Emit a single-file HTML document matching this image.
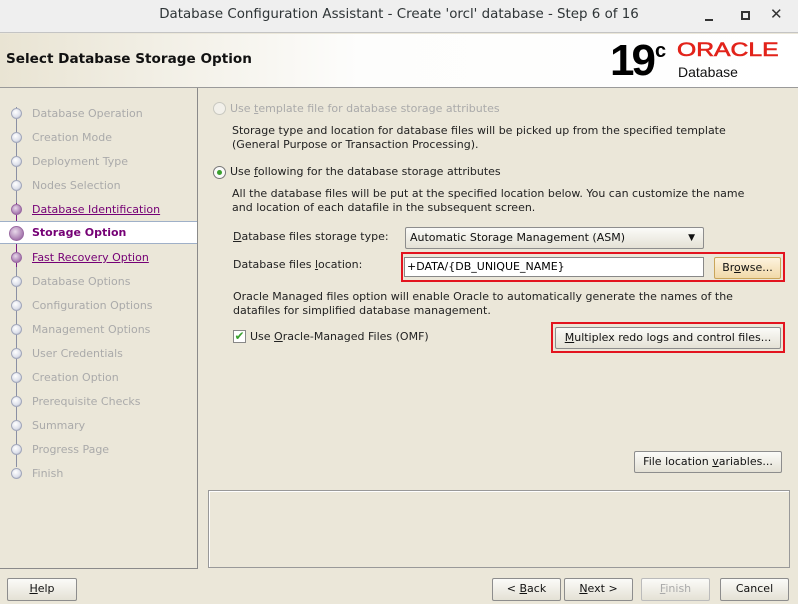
<!DOCTYPE html>
<html><head><style>
*{margin:0;padding:0;box-sizing:border-box}
body{width:798px;height:604px;overflow:hidden;background:#ebe7d9;font-family:"DejaVu Sans",sans-serif;font-size:11px;color:#222;position:relative}
.abs{position:absolute;white-space:nowrap}
#tb{left:0;top:0;width:798px;height:33px;background:#efefef;border-bottom:1px solid #c4c4c4}
#tb .t{position:absolute;left:0;width:798px;top:7px;text-align:center;font-size:13.4px;color:#2e3436}
#hd{left:0;top:34px;width:798px;height:54px;background:linear-gradient(90deg,#e9e4d3 0%,#fdfdfc 45%,#fff 100%);border-bottom:1px solid #9a9a9a}
#hd .h{position:absolute;left:6px;top:17px;font-size:13.6px;font-weight:bold;color:#111}
#lp{left:0;top:88px;width:198px;height:481px;border-right:1px solid #8a8a8a;border-bottom:1px solid #8a8a8a}
.step{position:absolute;left:32px;font-size:11px;color:#aaa;white-space:nowrap}
.dot{position:absolute;left:11px;width:11px;height:11px;border-radius:50%;background:radial-gradient(circle at 40% 35%,#fff,#dde0ea 60%,#9aa0b6);border:1px solid #a3a8bb}
.pdot{background:radial-gradient(circle at 40% 35%,#e8d8ea,#a77aaf 70%,#7e3f88);border-color:#9a6aa2}
.lnk{color:#750075;text-decoration:underline}
.btn{position:absolute;height:22px;border:1px solid #8d8d8d;border-radius:2px;background:linear-gradient(#fbfbf8,#e4e1d5);text-align:center;line-height:20px;font-size:11px;color:#111;white-space:nowrap}
.red{position:absolute;border:2px solid #e3141f}
u{text-decoration:underline}
</style></head><body>
<div id="tb" class="abs"><div class="t">Database Configuration Assistant - Create 'orcl' database - Step 6 of 16</div>
<div class="abs" style="left:705px;top:19px;width:8px;height:2px;background:#333"></div>
<div class="abs" style="left:741px;top:11px;width:9px;height:9px;border:2px solid #333"></div>
<div class="abs" style="left:770px;top:5px;font-size:15px;font-weight:bold;color:#333">✕</div>
</div>
<div id="hd" class="abs"><div class="h">Select Database Storage Option</div>
<div class="abs" style="left:610px;top:4px;font-family:'Liberation Sans',sans-serif;font-size:44px;font-weight:bold;letter-spacing:-3px;color:#000;line-height:46px">19</div>
<div class="abs" style="left:655px;top:6px;font-family:'Liberation Sans',sans-serif;font-size:20px;font-weight:bold;color:#000">c</div>
<div class="abs" style="left:677px;top:6px;font-family:'Liberation Sans',sans-serif;font-size:19px;color:#e2231a;letter-spacing:0px;transform:scaleX(1.3);transform-origin:left;-webkit-text-stroke:0.6px #e2231a">ORACLE</div>
<div class="abs" style="left:678px;top:30px;font-family:'Liberation Sans',sans-serif;font-size:14px;color:#111">Database</div>
</div>
<div id="lp" class="abs">
<div class="abs" style="left:16px;top:19px;width:1px;height:360px;background:#8a8fa3"></div>
<div class="abs" style="left:16px;top:115px;width:1px;height:64px;background:#7a1a85"></div>
<div class="abs" style="left:0;top:133px;width:197px;height:23px;background:#fff;border-top:1px solid #9fb0c8;border-bottom:1px solid #9fb0c8"></div>
</div>
<div class="abs" style="left:0;top:89px">
<div class="dot" style="top:19px"></div><div class="step" style="top:18px">Database Operation</div>
<div class="dot" style="top:43px"></div><div class="step" style="top:42px">Creation Mode</div>
<div class="dot" style="top:67px"></div><div class="step" style="top:66px">Deployment Type</div>
<div class="dot" style="top:91px"></div><div class="step" style="top:90px">Nodes Selection</div>
<div class="dot pdot" style="top:115px"></div><div class="step lnk" style="top:114px">Database Identification</div>
<div class="dot pdot" style="top:137px;left:9px;width:15px;height:15px"></div><div class="step" style="top:137px;color:#750075;font-weight:bold">Storage Option</div>
<div class="dot pdot" style="top:163px"></div><div class="step lnk" style="top:162px">Fast Recovery Option</div>
<div class="dot" style="top:187px"></div><div class="step" style="top:186px">Database Options</div>
<div class="dot" style="top:211px"></div><div class="step" style="top:210px">Configuration Options</div>
<div class="dot" style="top:235px"></div><div class="step" style="top:234px">Management Options</div>
<div class="dot" style="top:259px"></div><div class="step" style="top:258px">User Credentials</div>
<div class="dot" style="top:283px"></div><div class="step" style="top:282px">Creation Option</div>
<div class="dot" style="top:307px"></div><div class="step" style="top:306px">Prerequisite Checks</div>
<div class="dot" style="top:331px"></div><div class="step" style="top:330px">Summary</div>
<div class="dot" style="top:355px"></div><div class="step" style="top:354px">Progress Page</div>
<div class="dot" style="top:379px"></div><div class="step" style="top:378px">Finish</div>
</div>
<!-- main -->
<div class="abs" style="left:213px;top:102px;width:13px;height:13px;border-radius:50%;border:1px solid #c8c8c0;background:#f2f0ea"></div>
<div class="abs" style="left:230px;top:102px;color:#aaa">Use <u>t</u>emplate file for database storage attributes</div>
<div class="abs" style="left:232px;top:124px;line-height:14px">Storage type and location for database files will be picked up from the specified template<br>(General Purpose or Transaction Processing).</div>
<div class="abs" style="left:213px;top:166px;width:13px;height:13px;border-radius:50%;border:1px solid #777;background:#fafafa"><div style="position:absolute;left:3px;top:3px;width:5px;height:5px;border-radius:50%;background:#3aa02e"></div></div>
<div class="abs" style="left:230px;top:165px">Use <u>f</u>ollowing for the database storage attributes</div>
<div class="abs" style="left:232px;top:187px;line-height:14px">All the database files will be put at the specified location below. You can customize the name<br>and location of each datafile in the subsequent screen.</div>
<div class="abs" style="left:233px;top:230px"><u>D</u>atabase files storage type:</div>
<div class="btn" style="left:405px;top:227px;width:299px;text-align:left;padding-left:4px">Automatic Storage Management (ASM)<span style="position:absolute;right:8px;top:0;font-size:9px">▼</span></div>
<div class="abs" style="left:233px;top:258px">Database files <u>l</u>ocation:</div>
<div class="red" style="left:401px;top:252px;width:384px;height:30px"></div>
<div class="abs" style="left:404px;top:257px;width:300px;height:20px;background:#fff;border:1px solid #888;padding-left:2px;line-height:18px;color:#000">+DATA/{DB_UNIQUE_NAME}</div>
<div class="btn" style="left:714px;top:257px;width:67px;border-color:#c9a55a;background:linear-gradient(#fdf3de,#f1d9a8)">Br<u>o</u>wse...</div>
<div class="abs" style="left:233px;top:290px;line-height:14px">Oracle Managed files option will enable Oracle to automatically generate the names of the<br>datafiles for simplified database management.</div>
<div class="abs" style="left:233px;top:330px;width:13px;height:13px;border:1px solid #888;background:#fff;color:#3aa02e;font-size:12px;line-height:11px;text-align:center;font-weight:bold">✔</div>
<div class="abs" style="left:250px;top:330px">Use <u>O</u>racle-Managed Files (OMF)</div>
<div class="red" style="left:551px;top:322px;width:234px;height:31px"></div>
<div class="btn" style="left:555px;top:327px;width:226px"><u>M</u>ultiplex redo logs and control files...</div>
<div class="btn" style="left:634px;top:451px;width:148px">File location <u>v</u>ariables...</div>
<div class="abs" style="left:208px;top:490px;width:582px;height:78px;border:1px solid #999;box-shadow:inset 1px 1px 0 #fff"></div>
<div class="btn" style="left:7px;top:578px;width:70px;height:23px"><u>H</u>elp</div>
<div class="btn" style="left:492px;top:578px;width:69px;height:23px">&lt; <u>B</u>ack</div>
<div class="btn" style="left:564px;top:578px;width:69px;height:23px"><u>N</u>ext &gt;</div>
<div class="btn" style="left:641px;top:578px;width:69px;height:23px;color:#aaa;border-color:#bbb"><u>F</u>inish</div>
<div class="btn" style="left:720px;top:578px;width:69px;height:23px">Cancel</div>
</body></html>
